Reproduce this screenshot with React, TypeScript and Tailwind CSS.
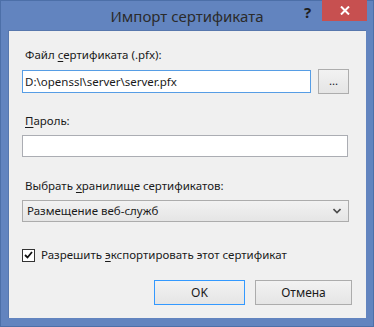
import React from "react";

const font = { fontFamily: '"Noto Sans", "Open Sans", sans-serif' };

function Key({ children }: { children: React.ReactNode }) {
  return <span className="underline underline-offset-2">{children}</span>;
}

export default function App() {
  return (
    <div
      className="w-[374px] h-[327px] bg-[#6284bf] border border-[#4c6fa8] flex flex-col text-[11.5px] text-[#1a1a1a]"
      style={font}
    >
      {/* title bar */}
      <div className="relative h-[29px] shrink-0">
        <div className="absolute left-0 right-0 top-[5px] text-center text-[15px] leading-[20px] text-[#2b2b2b]">
          Импорт сертификата
        </div>
        <div className="absolute left-[303px] top-[2px] text-[15px] font-bold leading-[18px] text-[#1f1f1f]">?</div>
        <div className="absolute left-[321px] top-[-1px] w-[45px] h-[21px] bg-[#c75050] flex items-center justify-center">
          <svg width="10" height="9" viewBox="0 0 10 9">
            <path d="M1 0.5 L9 8.5 M9 0.5 L1 8.5" stroke="#fff" strokeWidth="2" />
          </svg>
        </div>
      </div>

      {/* client area */}
      <div className="ml-[7px] w-[358px] h-[288px] bg-[#f0f0f0] border-t border-l border-[#5777ad] flex flex-col px-[13px]">
        <div className="mt-[16px] ml-[3px] leading-[16px]">
          Файл <Key>с</Key>ертификата (.pfx):
        </div>
        <div className="mt-[6px] flex items-center">
          <div className="w-[289px] h-[23px] bg-white border border-[#569de5] flex items-center px-[2px] leading-[16px]">
            D:\openssl\server\server.pfx
          </div>
          <div className="ml-[7px] w-[31px] h-[25px] border border-[#adadad] bg-gradient-to-b from-[#f2f2f2] to-[#e5e5e5] flex items-center justify-center leading-[12px] pb-[2px]">
            ...
          </div>
        </div>
        <div className="mt-[19px] ml-[3px] leading-[16px]">
          <Key>П</Key>ароль:
        </div>
        <div className="mt-[6px] w-[326px] h-[22px] bg-white border border-[#abadb3]" />
        <div className="mt-[21px] ml-[3px] leading-[16px]">
          Выбрать <Key>х</Key>ранилище сертификатов:
        </div>
        <div className="mt-[6px] w-[327px] h-[22px] border border-[#acacac] bg-gradient-to-b from-[#f2f2f2] to-[#e5e5e5] flex items-center justify-between pl-[4px] pr-[7px] leading-[16px]">
          <span>Размещение веб-служб</span>
          <svg width="8" height="6" viewBox="0 0 8 6">
            <path d="M0.5 1 L4 4.5 L7.5 1" stroke="#4a4a4a" strokeWidth="1.6" fill="none" />
          </svg>
        </div>
        <div className="mt-[25px] flex items-center">
          <div className="w-[13px] h-[13px] border border-[#333] bg-white flex items-center justify-center">
            <svg width="9" height="8" viewBox="0 0 9 8">
              <path d="M1 4 L3.5 6.5 L8 1" stroke="#111" strokeWidth="1.8" fill="none" />
            </svg>
          </div>
          <span className="ml-[6px] leading-[16px]">
            Разрешить <Key>э</Key>кспортировать этот сертификат
          </span>
        </div>
        <div className="mt-[17px] flex justify-end pr-[1px] gap-[10px]">
          <div className="w-[91px] h-[25px] border border-[#3399ff] bg-gradient-to-b from-[#f2f2f2] to-[#e5e5e5] flex items-center justify-center leading-[16px] text-[12px]">
            OK
          </div>
          <div className="w-[97px] h-[25px] border border-[#acacac] bg-gradient-to-b from-[#f2f2f2] to-[#e5e5e5] flex items-center justify-center leading-[16px] text-[12px]">
            Отмена
          </div>
        </div>
      </div>
    </div>
  );
}
